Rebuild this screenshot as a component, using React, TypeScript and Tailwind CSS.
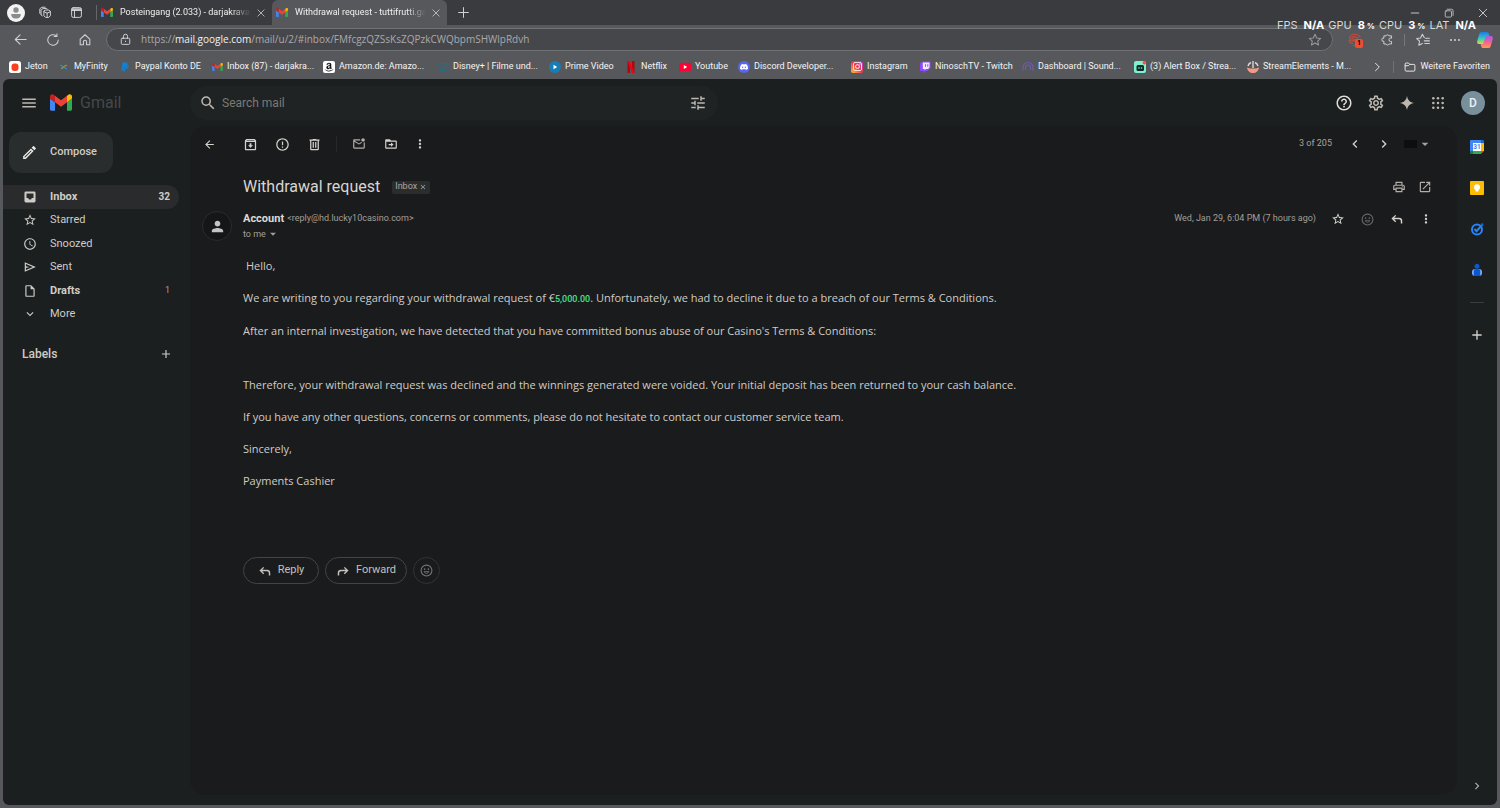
import React from "react";
import {
  MdAdd,
  MdArrowBack,
  MdArrowDropDown,
  MdChevronLeft,
  MdChevronRight,
  MdClose,
  MdErrorOutline,
  MdExpandMore,
  MdHelpOutline,
  MdMenu,
  MdMoreVert,
  MdOpenInNew,
  MdOutlineArchive,
  MdOutlineInsertDriveFile,
  MdOutlineMarkEmailUnread,
  MdOutlineModeEdit,
  MdOutlinePrint,
  MdOutlineSettings,
  MdPerson,
  MdSchedule,
  MdSearch,
  MdStarBorder,
  MdTune,
} from "react-icons/md";
import { FaAmazon, FaPaypal } from "react-icons/fa";
import { SiDiscord, SiInstagram, SiTwitch } from "react-icons/si";

const bodyFont = "font-['Segoe_UI','Open_Sans',sans-serif]";
const mailFont = "font-[Roboto,sans-serif]";

function GmailLogo({ className }: { className: string }) {
  return (
    <svg viewBox="52 42 88 66" className={className} aria-hidden="true">
      <path fill="#4285f4" d="M58 108h14V74L52 59v43c0 3.32 2.69 6 6 6" />
      <path fill="#34a853" d="M120 108h14c3.32 0 6-2.69 6-6V59l-20 15" />
      <path fill="#fbbc04" d="M120 48v26l20-15v-8c0-7.42-8.47-11.65-14.4-7.2" />
      <path fill="#ea4335" d="M72 74V48l24 18 24-18v26L96 92" />
      <path fill="#c5221f" d="M52 51v8l20 15V48l-5.6-4.2c-5.94-4.45-14.4-.22-14.4 7.2" />
    </svg>
  );
}

/* Thin line icons of the browser chrome, all on a 16 unit grid */
function LineIcon({ d, className = "size-4" }: { d: string; className?: string }) {
  return (
    <svg
      viewBox="0 0 16 16"
      fill="none"
      stroke="currentColor"
      strokeWidth="1.2"
      strokeLinecap="round"
      strokeLinejoin="round"
      className={`${className} shrink-0`}
      aria-hidden="true"
    >
      <path d={d} />
    </svg>
  );
}

const line = {
  workspaces:
    "M8 5h4l2 1.500v5.500l-2 2H8l-2-2V6.500zM6 7l4 1.800L14 7M10 8.800V14M4 12L2.500 11V5L5 3h4l1.200.8M2 10L1 9V3.500L3.500 1.500h4",
  tabs: "M4 2h8a2 2 0 012 2v8a2 2 0 01-2 2H4a2 2 0 01-2-2V4a2 2 0 012-2zM2 5.500h12M2.500 4.500h11M2.500 3.500h11M5.500 5.500V14",
  back: "M14 8H2.500M7.500 3L2.500 8l5 5",
  reload: "M14 8A6 6 0 1 1 12 3.500M12.500 1v3H9.300",
  home: "M2.500 7L8 2l5.500 5v6.500h-3.700V10a1.800 1.800 0 00-3.600 0v3.500H2.500z",
  lock: "M4 6.500h8a1.200 1.200 0 011.200 1.200v5.100A1.200 1.200 0 0112 14H4a1.200 1.200 0 01-1.200-1.200V7.700A1.200 1.200 0 014 6.500zM5.500 6.500V4a2.500 2.500 0 015 0v2.500M8 10v.6",
  star: "M8 1.500l1.900 4.200 4.600.5-3.400 3 1 4.600L8 11.500l-4.100 2.300 1-4.600-3.400-3 4.600-.5z",
  puzzle:
    "M13 6V3.500H9.800a1.900 1.900 0 00-3.600 0H3.500v3a1.900 1.900 0 100 3.600v3.400H6.200a1.900 1.900 0 003.600 0H13V10.500h-1a2.200 2.200 0 010-4.500z",
  favorites: "M9.500 5.500L7.300 1.500 5.200 5.700l-4.400.6 3.200 3.100-.8 4.500 4-2M11 6h4.300M9.500 9h5.800M10 12h5.300",
  chevron: "M6 3l5 5-5 5",
  folder: "M1.500 4A1.300 1.300 0 012.800 2.700H6l1.800 1.800h5.400a1.300 1.300 0 011.300 1.300v6.400a1.300 1.300 0 01-1.300 1.300H2.800a1.300 1.300 0 01-1.300-1.300zM1.500 6.300H6l1.800-1.800",
  plus: "M8 2v12M2 8h12",
  close: "M3 3l10 10M13 3L3 13",
};

interface GlyphProps {
  className?: string;
}

/* Solid icons of the mail app on the 24 unit Material grid */
function Glyph({ d, className = "size-3.5" }: GlyphProps & { d: string }) {
  return (
    <svg viewBox="0 0 24 24" fill="currentColor" fillRule="evenodd" className={className} aria-hidden="true">
      <path d={d} />
    </svg>
  );
}

const glyph = {
  inbox: "M5 2.500h14A2.500 2.500 0 0121.500 5v14a2.500 2.500 0 01-2.500 2.500H5A2.500 2.500 0 012.500 19V5A2.500 2.500 0 015 2.500zM6 6v7.500h3c.3 1.800 1.500 2.800 3 2.800s2.700-1 3-2.800h3V6z",
  sent: "M3 20V4l19 8zM5 17l11.850-5L5 7v3.500l6 1.500-6 1.500z",
  trash: "M7 21a2 2 0 01-2-2V6H4V4h5V3h6v1h5v2h-1v13a2 2 0 01-2 2zM7 6v13h10V6zM9 8h2v9H9zM13 8h2v9h-2z",
  reply: "M18.500 19.500v-4a3 3 0 00-3-3H7.200l3.400 3.400L9 17.500l-6.500-6.300L9 5l1.600 1.600-3.400 3.400h8.300a5.500 5.500 0 015.500 5.500v4z",
  forward: "M5.500 19.500v-4a3 3 0 013-3h8.300l-3.400 3.400 1.600 1.600 6.500-6.300L15 5l-1.600 1.600 3.400 3.400H8.500A5.500 5.500 0 003 15.500v4z",
  spark: "M12 1c.8 6.500 4.500 10.200 11 11-6.500.8-10.200 4.500-11 11-.8-6.500-4.500-10.200-11-11 6.500-.8 10.200-4.500 11-11z",
  move: "M3.500 4H10l2 2h8.500A1.500 1.500 0 0122 7.500v11a1.500 1.500 0 01-1.500 1.500h-17A1.500 1.500 0 012 18.500v-13A1.500 1.500 0 013.500 4zM4 8v10h16V8zM8 12h4V9.500l4.500 3.500-4.500 3.500V14H8z",
};

const InboxIcon = ({ className }: GlyphProps) => <Glyph d={glyph.inbox} className={className} />;
const SentIcon = ({ className }: GlyphProps) => <Glyph d={glyph.sent} className={className} />;

function AppsIcon({ className }: GlyphProps) {
  return (
    <svg viewBox="0 0 24 24" fill="currentColor" className={className} aria-hidden="true">
      {[5, 12, 19].map((y) => [5, 12, 19].map((x) => <circle key={`${x}-${y}`} cx={x} cy={y} r="1.900" />))}
    </svg>
  );
}

function Smiley({ className = "size-3.5" }: GlyphProps) {
  return (
    <svg viewBox="0 0 24 24" className={className} aria-hidden="true">
      <circle cx="12" cy="12" r="10" fill="none" stroke="currentColor" strokeWidth="2" />
      <circle cx="8.500" cy="9.500" r="1.500" fill="currentColor" />
      <circle cx="15.500" cy="9.500" r="1.500" fill="currentColor" />
      <path d="M7.500 14h9a4.800 4.800 0 01-9 0z" fill="none" stroke="currentColor" strokeWidth="1.500" />
    </svg>
  );
}

interface IconButtonProps {
  label: string;
  className?: string;
  children: React.ReactNode;
}

function IconButton({ label, className = "w-8", children }: IconButtonProps) {
  return (
    <button type="button" aria-label={label} className={`flex shrink-0 items-center justify-center ${className}`}>
      {children}
    </button>
  );
}

const tabs = [
  { title: "Posteingang (2.033) - darjakravari", active: false },
  { title: "Withdrawal request - tuttifrutti.ga", active: true },
];

function TitleBar() {
  return (
    <div className="flex h-[25px] items-center bg-[#3a3b3f] text-[#d5d5d6]">
      <IconButton label="Profile" className="ml-[7px] w-[18px]">
        <svg viewBox="0 0 18 18" className="size-[18px]" aria-hidden="true">
          <circle cx="9" cy="9" r="9" fill="#f3f3f3" />
          <circle cx="9" cy="6" r="2.700" fill="#8b8b8b" />
          <path d="M4.300 10h9.400c.4 3-1.900 4.600-4.700 4.600S3.900 13 4.300 10z" fill="#8b8b8b" />
        </svg>
      </IconButton>
      <IconButton label="Workspaces" className="ml-3 w-4">
        <LineIcon d={line.workspaces} className="size-[13px]" />
      </IconButton>
      <IconButton label="Tab actions" className="ml-[15px] w-4">
        <LineIcon d={line.tabs} className="size-[13px]" />
      </IconButton>
      <span className="ml-3 h-[15px] w-px bg-[#65666a]" />
      {tabs.map((tab) => (
        <div
          key={tab.title}
          className={`flex h-full w-[175px] items-center rounded-t-md pl-1 ${tab.active ? "bg-[#57585c]" : ""}`}
        >
          <GmailLogo className="h-[9px] w-3 shrink-0" />
          <a
            href="#tab"
            className="ml-[7px] w-[131px] mask-r-from-85% text-[9px] whitespace-nowrap text-[#f0f0f0]"
          >
            {tab.title}
          </a>
          <IconButton label="Close tab" className="ml-0.5 w-4">
            <LineIcon d={line.close} className="size-2.5" />
          </IconButton>
        </div>
      ))}
      <IconButton label="New tab" className="ml-2 w-4">
        <LineIcon d={line.plus} className="size-[13px]" />
      </IconButton>
      <div className="ml-auto flex items-center">
        <IconButton label="Minimize" className="w-[34px]">
          <LineIcon d="M3 8h10" className="size-3" />
        </IconButton>
        <IconButton label="Restore" className="w-[34px]">
          <LineIcon
            d="M3.500 4.500h7a1.500 1.500 0 011.500 1.500v7a1.500 1.500 0 01-1.500 1.500h-7A1.500 1.500 0 012 13V6a1.500 1.500 0 011.500-1.500zM5 2h7a2.500 2.500 0 012.500 2.500V12"
            className="size-2.5"
          />
        </IconButton>
        <IconButton label="Close" className="w-[34px]">
          <LineIcon d={line.close} className="size-3" />
        </IconButton>
      </div>
      <Overlay />
    </div>
  );
}

const stats = [
  { name: "FPS", value: "N/A", unit: "" },
  { name: "GPU", value: "8", unit: "%" },
  { name: "CPU", value: "3", unit: "%" },
  { name: "LAT", value: "N/A", unit: "" },
];

/* Performance counters that float over the window frame */
function Overlay() {
  return (
    <div className="pointer-events-none absolute top-[17px] right-6 z-10 flex gap-1 font-[Inter,sans-serif] text-[11px] leading-4 text-[#d8d8d8]">
      {stats.map((s) => (
        <span key={s.name} className="flex items-baseline gap-1.5">
          {s.name}
          <b className="text-white">
            {s.value}
            {s.unit && <small className="ml-0.5 text-[8px]">{s.unit}</small>}
          </b>
        </span>
      ))}
    </div>
  );
}

function AddressBar() {
  return (
    <div className="flex h-[29px] items-center pr-[7px] pl-3 text-[#d0d0d1]">
      <IconButton label="Back" className="w-4">
        <LineIcon d={line.back} className="size-[15px]" />
      </IconButton>
      <IconButton label="Reload" className="ml-[17px] w-4">
        <LineIcon d={line.reload} className="size-[14px]" />
      </IconButton>
      <IconButton label="Home" className="ml-4 w-4">
        <LineIcon d={line.home} className="size-[14px]" />
      </IconButton>
      <div className="ml-[13px] flex h-[23px] flex-1 items-center rounded-full border border-[#717276] bg-[#46474b] pr-2.5 pl-3">
        <LineIcon d={line.lock} className="size-[13px]" />
        <a
          href="#inbox"
          aria-label="Address"
          className={`ml-[9px] flex-1 text-[10px] text-[#a9aaac] ${bodyFont}`}
        >
          https://<span className="text-[#f2f2f2]">mail.google.com</span>
          /mail/u/2/#inbox/FMfcgzQZSsKsZQPzkCWQbpmSHWlpRdvh
        </a>
        <IconButton label="Add to favourites" className="w-[14px] text-[#97989b]">
          <LineIcon d={line.star} className="size-[14px]" />
        </IconButton>
      </div>
      <IconButton label="Coupons" className="relative ml-[14px] w-4">
        <svg viewBox="0 0 16 16" className="size-[14px]" fill="none" stroke="#c4493a" strokeWidth="1.400" aria-hidden="true">
          <path d="M14 5C12 .5 4 0 2 5c-.6 3 2 4 6 4s4 2 1 3" />
          <path d="M11.500 6C9 3.300 5 3.600 4.500 5.500S8 7 10.500 7.500s4 2 3 4-4.500 3.500-8 2.500" />
          <path d="M1.500 8c0 2 2 3.800 4.500 4" />
        </svg>
        <span className="absolute top-1.5 left-2 flex h-[9px] w-2 items-center justify-center rounded-xs bg-[#f04e33] text-[7px] font-bold text-black">
          1
        </span>
      </IconButton>
      <IconButton label="Extensions" className="ml-4 w-4">
        <LineIcon d={line.puzzle} className="size-[13px]" />
      </IconButton>
      <span className="ml-[9px] h-3 w-px bg-[#77787c]" />
      <IconButton label="Favourites" className="ml-2.5 w-4">
        <LineIcon d={line.favorites} className="size-[14px]" />
      </IconButton>
      <IconButton label="More" className="ml-4 w-4">
        <svg viewBox="0 0 16 16" className="size-4" fill="currentColor" aria-hidden="true">
          <circle cx="4" cy="8" r="1" />
          <circle cx="8" cy="8" r="1" />
          <circle cx="12" cy="8" r="1" />
        </svg>
      </IconButton>
      <IconButton label="Copilot" className="ml-[14px] w-4">
        <svg viewBox="0 0 16 16" className="size-4" aria-hidden="true">
          <defs>
            <linearGradient id="copilotA" x1="0" y1="0" x2="0" y2="1">
              <stop offset="0" stopColor="#1b7de0" />
              <stop offset=".5" stopColor="#2fc3c9" />
              <stop offset="1" stopColor="#d9d93c" />
            </linearGradient>
            <linearGradient id="copilotB" x1="0" y1="0" x2="0" y2="1">
              <stop offset="0" stopColor="#a35be8" />
              <stop offset=".5" stopColor="#f0609a" />
              <stop offset="1" stopColor="#ff9a4d" />
            </linearGradient>
          </defs>
          <path d="M4.500 0H10c1 0 1.500.8 1.800 1.800L12.400 4H10L7.500 10.500c-.3 1-.8 1.500-1.800 1.500H2c-1.800 0-2.200-1.200-1.700-3l1.800-6.500C2.600.8 3 0 4.500 0z" fill="url(#copilotA)" />
          <path d="M11.500 16H6c-1 0-1.500-.8-1.800-1.800L3.600 12H6l2.500-6.500c.3-1 .8-1.500 1.800-1.500H14c1.800 0 2.200 1.200 1.700 3l-1.800 6.500c-.5 1.700-.9 2.500-2.400 2.500z" fill="url(#copilotB)" />
        </svg>
      </IconButton>
    </div>
  );
}

const svgBox = { viewBox: "0 0 12 12", className: "size-3", "aria-hidden": true } as const;

const bookmarks = [
  {
    title: "Jeton",
    width: "w-[49px]",
    icon: (
      <svg {...svgBox}>
        <rect width="12" height="12" rx="2.500" fill="#fff" />
        <rect x="2.500" y="2.500" width="7" height="7.500" rx="3" fill="#f8401f" />
      </svg>
    ),
  },
  {
    title: "MyFinity",
    width: "w-[61px]",
    icon: (
      <svg {...svgBox} fill="none" strokeWidth="1.300">
        <path d="M2 4.500c2-1 4 3.500 7 3" stroke="#2b8fb5" />
        <path d="M3 7.500c2 0 3-3.500 6-3" stroke="#a38a3c" />
      </svg>
    ),
  },
  { title: "Paypal Konto DE", width: "w-[92px]", icon: <FaPaypal className="size-[10px] text-[#1480cf]" /> },
  { title: "Inbox (87) - darjakra...", width: "w-[112px]", icon: <GmailLogo className="h-2 w-[11px]" /> },
  {
    title: "Amazon.de: Amazo...",
    width: "w-[114px]",
    icon: (
      <span className="flex size-3 items-center justify-center rounded-xs bg-white">
        <FaAmazon className="size-[10px] text-[#181818]" />
      </span>
    ),
  },
  {
    title: "Disney+ | Filme und...",
    width: "w-[112px]",
    icon: (
      <svg {...svgBox} fill="none" stroke="#276e82" strokeWidth="1.200">
        <path d="M1 3.500C5 1 11 3 11 6.500S6 10.500 2.500 9C1 8 4 6 8 6.500M5 4.500v5" />
      </svg>
    ),
  },
  {
    title: "Prime Video",
    width: "w-[76px]",
    icon: (
      <svg {...svgBox}>
        <circle cx="6" cy="6" r="6" fill="#167db5" />
        <path d="M4.500 3.800v4.400L8.200 6z" fill="#fff" />
      </svg>
    ),
  },
  {
    title: "Netflix",
    width: "w-[54px]",
    icon: (
      <svg {...svgBox}>
        <path d="M2.500 0H5v12H2.500zM7 0h2.500v12H7z" fill="#b1060f" />
        <path d="M2.500 0H5l4.500 12H7z" fill="#e50914" />
      </svg>
    ),
  },
  {
    title: "Youtube",
    width: "w-[59px]",
    icon: (
      <svg {...svgBox}>
        <rect y="1.800" width="12" height="8.400" rx="2.200" fill="#ff0033" />
        <path d="M4.800 4v4L8.200 6z" fill="#fff" />
      </svg>
    ),
  },
  {
    title: "Discord Developer...",
    width: "w-[113px]",
    icon: (
      <span className="flex size-3 items-center justify-center rounded-full bg-[#5865f2]">
        <SiDiscord className="size-2 text-white" />
      </span>
    ),
  },
  {
    title: "Instagram",
    width: "w-[68px]",
    icon: (
      <span className="flex size-3 items-center justify-center rounded-xs bg-linear-to-tr from-[#fdbb2d] via-[#f0324a] to-[#a92fd4]">
        <SiInstagram className="size-[9px] text-white" />
      </span>
    ),
  },
  {
    title: "NinoschTV - Twitch",
    width: "w-[103px]",
    icon: (
      <svg {...svgBox}>
        <path d="M3 .5h8.500v6.500L8.500 10H6.500L4.500 12v-2H1V2.500z" fill="#9146ff" />
        <path d="M3.800 1.500h6.700v5L9 8H7L5.500 9.300V8H3.800z" fill="#f1e9ff" />
        <path d="M6 3.200h1v2.500H6zM8.300 3.200h1v2.500h-1z" fill="#9146ff" />
      </svg>
    ),
  },
  {
    title: "Dashboard | Sound...",
    width: "w-[112px]",
    icon: (
      <svg {...svgBox} fill="none" stroke="#6e5cb4" strokeWidth="1.100">
        <path d="M1 9.500V6.500a5 5 0 0110 0v3M3.500 9V6.500a2.500 2.500 0 015 0V9" />
      </svg>
    ),
  },
  {
    title: "(3) Alert Box / Strea...",
    width: "w-[113px]",
    icon: (
      <svg {...svgBox}>
        <rect width="12" height="12" rx="2" fill="#7ef2cf" />
        <rect x="2.500" y="4" width="7.500" height="6" rx="1.500" fill="#0b2a26" />
        <circle cx="5" cy="7" r=".8" fill="#7ef2cf" />
        <circle cx="7.500" cy="7" r=".8" fill="#7ef2cf" />
        <circle cx="10.300" cy="1.800" r="1.700" fill="#f0503c" />
      </svg>
    ),
  },
  {
    title: "StreamElements - M...",
    width: "w-[113px]",
    icon: (
      <svg {...svgBox}>
        <path d="M1 5a5.500 5.500 0 013-3.500M11 5a5.500 5.500 0 00-3-3.500M6 0v7" stroke="#e3d3d0" strokeWidth="1.400" fill="none" />
        <path d="M0 6.500l3 1h6l3-1c-.3 3.500-3 5.500-6 5.500s-5.700-2-6-5.500z" fill="#f39a86" />
      </svg>
    ),
  },
];

function BookmarksBar() {
  return (
    <nav aria-label="Favourites" className="flex h-[25px] items-center pr-2.5 pl-[9px] text-[9px] text-[#f4f4f4]">
      {bookmarks.map((b) => (
        <a key={b.title} href="#bookmark" className={`flex shrink-0 items-center gap-1 whitespace-nowrap ${b.width}`}>
          <span className="flex w-3 shrink-0 justify-center">{b.icon}</span>
          {b.title}
        </a>
      ))}
      <div className="ml-auto flex items-center">
        <IconButton label="More favourites" className="w-3">
          <LineIcon d={line.chevron} className="size-3" />
        </IconButton>
        <span className="mx-2.5 h-3 w-px bg-[#717276]" />
        <a href="#bookmarks" className="flex items-center gap-1 whitespace-nowrap">
          <LineIcon d={line.folder} className="size-3" />
          Weitere Favoriten
        </a>
      </div>
    </nav>
  );
}

function MailHeader() {
  return (
    <header className="flex h-[47px] items-center text-[#bdb9b1]">
      <div className="flex w-[187px] shrink-0 items-center">
        <IconButton label="Main menu" className="ml-[18px] w-4">
          <MdMenu className="size-[18px] shrink-0" />
        </IconButton>
        <GmailLogo className="ml-[13px] h-[17px] w-[22px]" />
        <span className="ml-2 text-[16px] leading-5 text-[#45494a]">Gmail</span>
      </div>
      <form role="search" className="flex h-[34px] w-[528px] items-center rounded-full bg-[#1f2324] pr-2.5 pl-2">
        <IconButton label="Search" className="w-5">
          <MdSearch className="size-[18px]" />
        </IconButton>
        <input
          type="text"
          aria-label="Search mail"
          placeholder="Search mail"
          className="ml-1 min-w-0 flex-1 bg-transparent text-[12px] outline-none placeholder:text-[#7c7972]"
        />
        <IconButton label="Search options" className="w-5">
          <MdTune className="size-[18px]" />
        </IconButton>
      </form>
      <div className="ml-auto flex items-center pr-3">
        <IconButton label="Support" className="w-8 text-[#e0deda]">
          <MdHelpOutline className="size-[18px]" />
        </IconButton>
        <IconButton label="Settings">
          <MdOutlineSettings className="size-[18px]" />
        </IconButton>
        <IconButton label="Gemini" className="w-[30px]">
          <Glyph d={glyph.spark} className="size-4" />
        </IconButton>
        <IconButton label="Google apps">
          <AppsIcon className="size-4" />
        </IconButton>
        <button
          type="button"
          aria-label="Account"
          className="ml-[7px] size-6 rounded-full bg-[#78909c] text-[12px] font-medium text-[#eceff1]"
        >
          D
        </button>
      </div>
    </header>
  );
}

const folders = [
  { name: "Inbox", Icon: InboxIcon, count: "32", bold: true, active: true },
  { name: "Starred", Icon: MdStarBorder },
  { name: "Snoozed", Icon: MdSchedule },
  { name: "Sent", Icon: SentIcon },
  { name: "Drafts", Icon: MdOutlineInsertDriveFile, count: "1", bold: true },
  { name: "More", Icon: MdExpandMore },
];

function Sidebar() {
  return (
    <aside className="w-[187px] shrink-0 pt-1.5 text-[11px] text-[#cfccc6]">
      <button
        type="button"
        className="ml-1.5 flex h-[41px] w-[104px] items-center gap-3 rounded-xl bg-[#292d2e] pl-3 font-medium"
      >
        <MdOutlineModeEdit className="size-[17px] text-[#eceae6]" />
        Compose
      </button>
      <ul className="mt-3 grid h-[141px] w-[176px] grid-rows-6">
        {folders.map(({ name, Icon, count, bold, active }) => (
          <li key={name} className={active ? "rounded-r-full bg-[#2a2b2d]" : ""}>
            <a href="#folder" className={`flex h-full items-center pr-[9px] pl-5 ${bold ? "font-bold" : ""}`}>
              <Icon className="size-[14px]" />
              <span className="ml-[13px] flex-1">{name}</span>
              {count && <span className={active ? "text-[10px]" : "text-[9px] font-normal text-[#a39f97]"}>{count}</span>}
            </a>
          </li>
        ))}
      </ul>
      <div className="mt-5 flex h-[15px] w-[176px] items-center justify-between pr-1.5 pl-[19px] text-[12px] font-medium">
        Labels
        <IconButton label="Create new label" className="w-[14px]">
          <MdAdd className="size-[14px]" />
        </IconButton>
      </div>
    </aside>
  );
}

function Toolbar() {
  return (
    <div className="flex h-9 items-center pr-6 pl-1 text-[#d5d2cd]">
      <IconButton label="Back to Inbox" className="w-[31px]">
        <MdArrowBack className="size-[13px]" />
      </IconButton>
      <IconButton label="Archive" className="ml-[9px] w-8">
        <MdOutlineArchive className="size-[15px]" />
      </IconButton>
      <IconButton label="Report spam">
        <MdErrorOutline className="size-[15px]" />
      </IconButton>
      <IconButton label="Delete">
        <Glyph d={glyph.trash} className="size-[15px]" />
      </IconButton>
      <span className="mx-1.5 h-4 w-px bg-[#26282a]" />
      <IconButton label="Mark as unread" className="w-8 text-[#b3afa8]">
        <MdOutlineMarkEmailUnread className="size-[14px]" />
      </IconButton>
      <IconButton label="Move to">
        <Glyph d={glyph.move} />
      </IconButton>
      <IconButton label="More" className="w-[26px]">
        <MdMoreVert className="size-[14px]" />
      </IconButton>
      <span className="ml-auto text-[9px] text-[#a8a49c]">3 of 205</span>
      <IconButton label="Newer" className="ml-2 w-[29px]">
        <MdChevronLeft className="size-4" />
      </IconButton>
      <IconButton label="Older" className="w-[29px]">
        <MdChevronRight className="size-4" />
      </IconButton>
      <button type="button" aria-label="Input tools" className="ml-1.5 flex items-center">
        <span className="h-2 w-[13px] bg-[#0d0e0f]" />
        <MdArrowDropDown className="size-4 text-[#a8a49c]" />
      </button>
    </div>
  );
}

function Message() {
  return (
    <article className="pr-[17px] pb-8 pl-[53px]">
      <div className="mt-[13px] flex h-6 items-center">
        <h1 className="text-[16px] text-[#d8d5cf]">Withdrawal request</h1>
        <span className="ml-3 flex h-[13px] items-center gap-0.5 rounded-xs bg-[#2a2d2e] px-[3px] text-[9px] text-[#aaa69e]">
          Inbox
          <button type="button" aria-label="Remove label Inbox">
            <MdClose className="size-2" />
          </button>
        </span>
        <div className="mr-0.5 ml-auto flex text-[#b3afa8]">
          <IconButton label="Print all" className="w-[27px]">
            <MdOutlinePrint className="size-[14px]" />
          </IconButton>
          <IconButton label="In new window" className="w-[26px]">
            <MdOpenInNew className="size-[14px]" />
          </IconButton>
        </div>
      </div>

      <div className="mt-3 -ml-[41px] flex">
        <span className="flex size-[30px] items-center justify-center rounded-full border border-[#2b2c2e] bg-[#151617]">
          <MdPerson className="size-[17px] text-[#c4c4c6]" />
        </span>
        <div className="ml-[11px] flex-1">
          <div className="flex h-4 items-center">
            <b className="text-[11px] text-[#dcdad5]">Account</b>
            <span className="ml-[3px] text-[9px] text-[#a39f97]">&lt;reply@hd.lucky10casino.com&gt;</span>
            <time className="ml-auto text-[9px] text-[#a39f97]">Wed, Jan 29, 6:04 PM (7 hours ago)</time>
            <div className="ml-[7px] flex text-[#d5d2cd]">
              <IconButton label="Star" className="w-[29px]">
                <MdStarBorder className="size-[14px]" />
              </IconButton>
              <IconButton label="Add reaction" className="w-[30px] text-[#68696a]">
                <Smiley className="size-[13px]" />
              </IconButton>
              <IconButton label="Reply" className="w-[29px]">
                <Glyph d={glyph.reply} />
              </IconButton>
              <IconButton label="More message options" className="w-[29px]">
                <MdMoreVert className="size-[14px]" />
              </IconButton>
            </div>
          </div>
          <button type="button" aria-label="Show details" className="flex items-center text-[9px] leading-[14px] text-[#a39f97]">
            to me
            <MdArrowDropDown className="size-[14px]" />
          </button>
        </div>
      </div>

      <div className={`mt-4 flex flex-col gap-[14px] text-[11px] leading-[18px] text-[#cfccc6] ${bodyFont}`}>
        <p className="pl-[3px]">Hello,</p>
        <p>
          We are writing to you regarding your withdrawal request of €
          <span className="font-[Roboto,sans-serif] text-[9px] font-medium text-[#45e08c]">5,000.00</span>.
          Unfortunately, we had to decline it due to a breach of our Terms &amp; Conditions.
        </p>
        <p>
          After an internal investigation, we have detected that you have committed bonus abuse of our Casino&#39;s Terms
          &amp; Conditions:
        </p>
        <p className="mt-[22px]">
          Therefore, your withdrawal request was declined and the winnings generated were voided. Your initial deposit
          has been returned to your cash balance.
        </p>
        <p>
          If you have any other questions, concerns or comments, please do not hesitate to contact our customer service
          team.
        </p>
        <p>Sincerely,</p>
        <p>Payments Cashier</p>
      </div>

      <div className="mt-[67px] flex gap-1.5 text-[11px] text-[#c4c1ba]">
        <button
          type="button"
          className="flex h-[27px] w-[76px] items-center justify-center gap-1.5 rounded-full border border-[#45443f]"
        >
          <Glyph d={glyph.reply} />
          Reply
        </button>
        <button
          type="button"
          className="flex h-[27px] w-[82px] items-center justify-center gap-1.5 rounded-full border border-[#45443f]"
        >
          <Glyph d={glyph.forward} />
          Forward
        </button>
        <button
          type="button"
          aria-label="Add reaction"
          className="flex size-[27px] items-center justify-center rounded-full border border-[#343432] text-[#77756f]"
        >
          <Smiley className="size-[13px]" />
        </button>
      </div>
    </article>
  );
}

function SidePanel() {
  return (
    <aside className="flex w-10 shrink-0 flex-col items-center pt-3.5">
      <IconButton label="Calendar" className="size-[14px]">
        <svg viewBox="0 0 14 14" className="size-[14px]" aria-hidden="true">
          <path d="M1 0h10v3H3v8H0V1a1 1 0 011-1z" fill="#4285f4" />
          <path d="M11 0h2a1 1 0 011 1v2h-3z" fill="#1967d2" />
          <path d="M11 3h3v8h-3z" fill="#fbbc04" />
          <path d="M3 11h8v3H3z" fill="#34a853" />
          <path d="M0 11h3v3H1a1 1 0 01-1-1z" fill="#188038" />
          <path d="M11 11h3l-3 3z" fill="#ea4335" />
          <path d="M3 3h8v8H3z" fill="#fff" />
          <text x="7" y="9.300" textAnchor="middle" fontSize="6.500" fontWeight="700" fontFamily="Roboto" fill="#4285f4">
            31
          </text>
        </svg>
      </IconButton>
      <IconButton label="Keep" className="mt-[27px] size-[14px]">
        <svg viewBox="0 0 14 14" className="size-[14px]" aria-hidden="true">
          <rect width="14" height="14" rx="1" fill="#fbbc04" />
          <circle cx="7" cy="6.200" r="3" fill="#fff" />
          <path d="M5.500 8h3v2.500h-3z" fill="#fff" />
        </svg>
      </IconButton>
      <IconButton label="Tasks" className="mt-[27px] size-[14px]">
        <svg viewBox="0 0 14 14" className="size-[14px]" fill="none" aria-hidden="true">
          <circle cx="7" cy="7.500" r="5" stroke="#2684fc" strokeWidth="2" />
          <path d="M4.500 7l2 2.200L12.500 2.500" stroke="#2684fc" strokeWidth="2" />
          <circle cx="12.200" cy="2.500" r="1.300" fill="#0066da" />
        </svg>
      </IconButton>
      <IconButton label="Contacts" className="mt-[27px] size-[14px]">
        <svg viewBox="0 0 14 14" className="size-[14px]" aria-hidden="true">
          <circle cx="7" cy="3.200" r="2.500" fill="#0b57d0" />
          <rect x="2" y="6" width="10" height="7" rx="3" fill="#7baaf7" />
          <path d="M3.800 8a2 2 0 012-2h2.400a2 2 0 012 2v5H3.800z" fill="#0b57d0" />
        </svg>
      </IconButton>
      <span className="mt-[25px] h-px w-[14px] bg-[#3a3d3e]" />
      <IconButton label="Get add-ons" className="mt-6 size-4 text-[#d5d2cd]">
        <MdAdd className="size-4" />
      </IconButton>
      <IconButton label="Hide side panel" className="mt-auto mb-3 size-[14px] text-[#b3afa8]">
        <MdChevronRight className="size-[14px]" />
      </IconButton>
    </aside>
  );
}

export default function App() {
  return (
    <div className={`relative flex min-h-screen flex-col overflow-hidden bg-[#57585c] ${mailFont}`}>
      <TitleBar />
      <AddressBar />
      <BookmarksBar />
      <div className="mx-[3px] mb-[3px] flex flex-1 flex-col rounded-md bg-[#1b1f20]">
        <MailHeader />
        <div className="flex flex-1">
          <Sidebar />
          <main className="mb-2.5 min-w-0 flex-1 rounded-2xl bg-[#1a1b1d]">
            <Toolbar />
            <Message />
          </main>
          <SidePanel />
        </div>
      </div>
    </div>
  );
}
